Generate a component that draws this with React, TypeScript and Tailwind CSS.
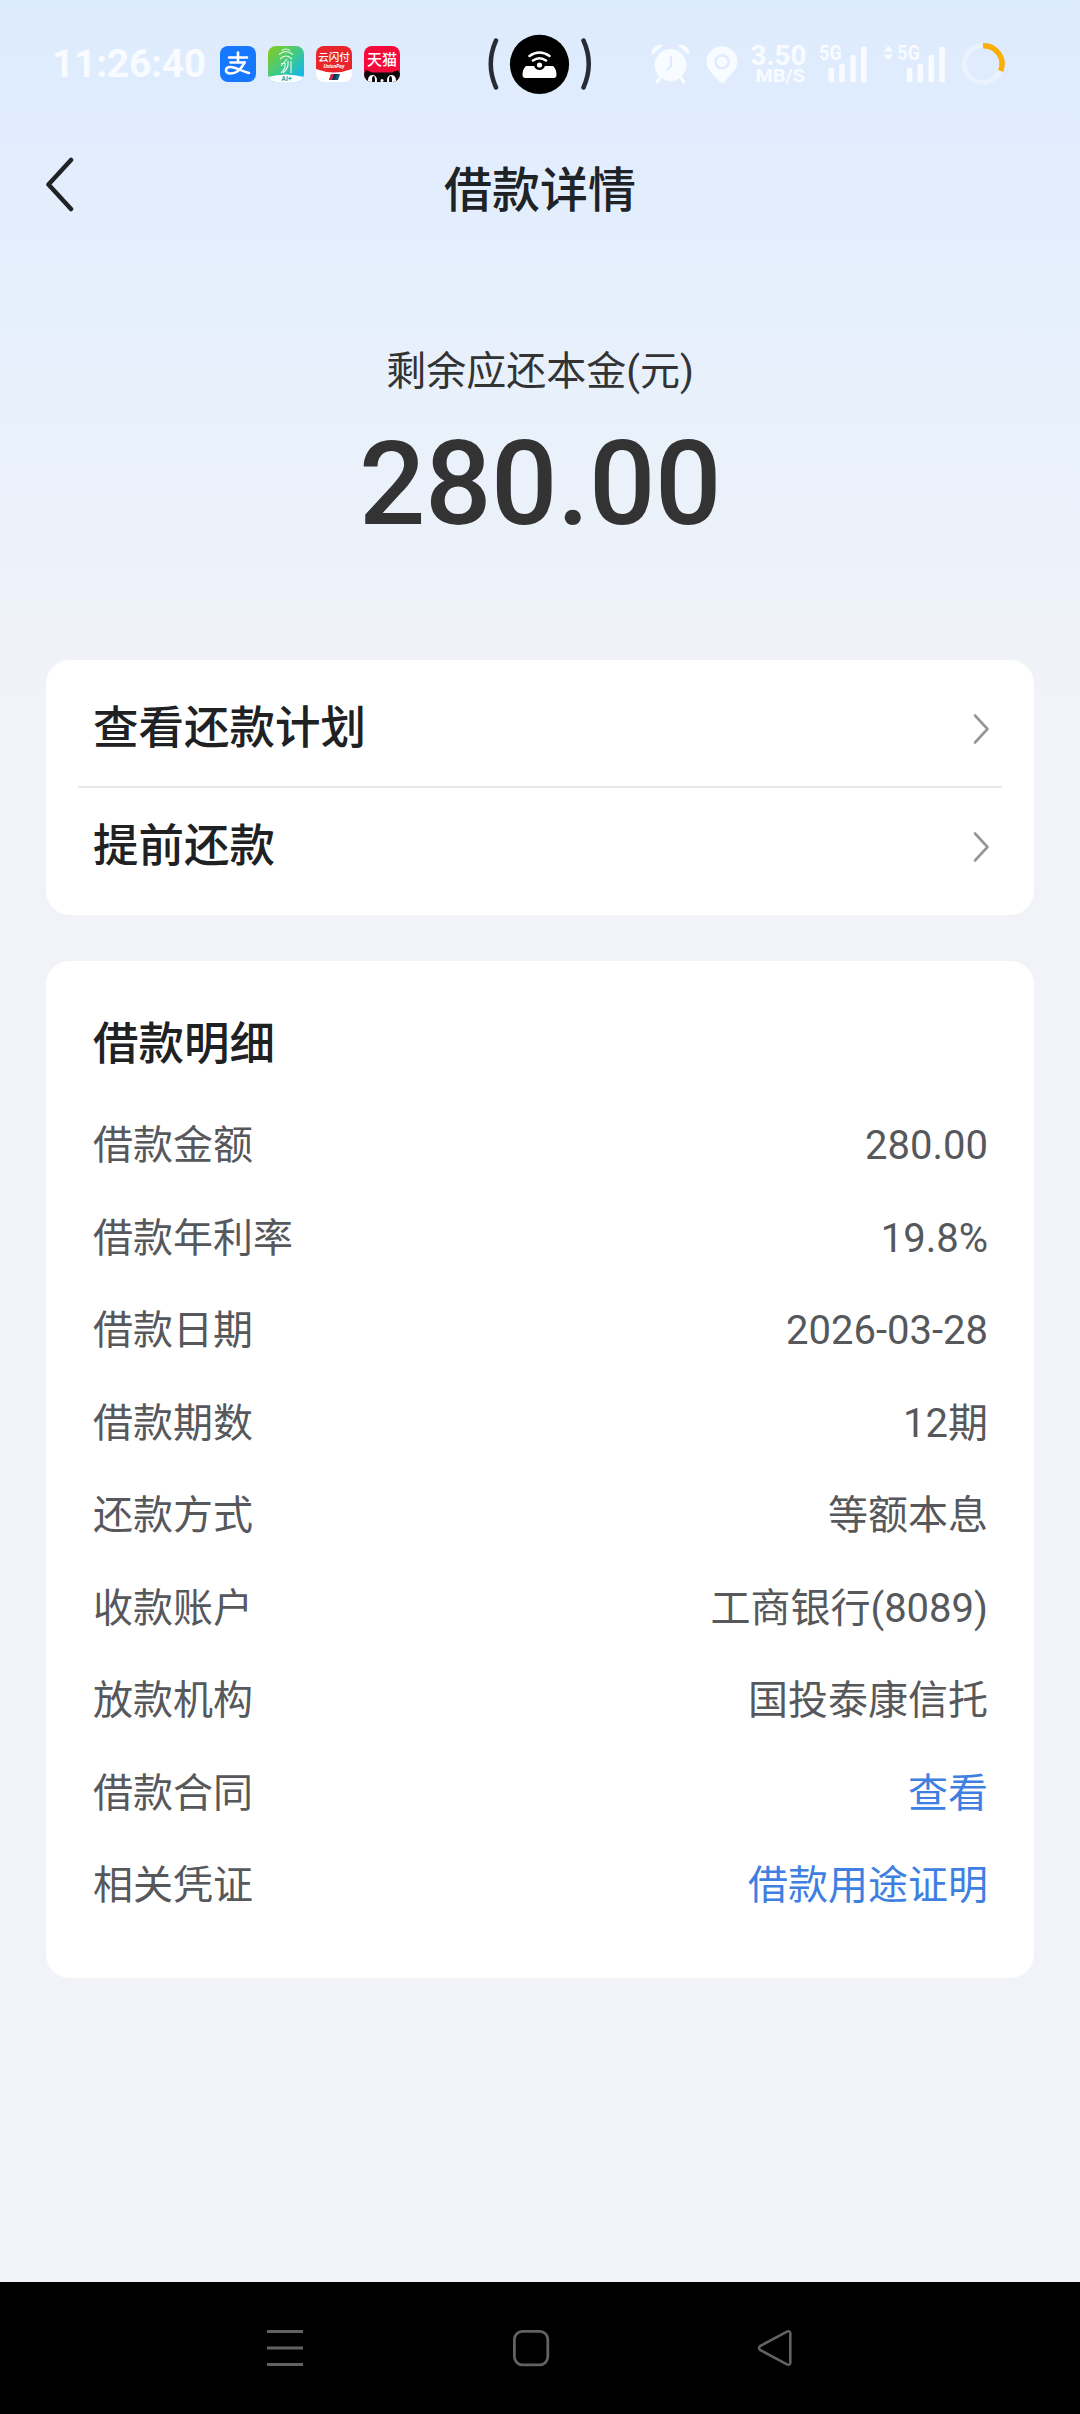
import React from 'react';

interface DetailRow {
  label: string;
  value: string;
  link?: boolean;
}

const actions = ['查看还款计划', '提前还款'];

const details: DetailRow[] = [
  { label: '借款金额', value: '280.00' },
  { label: '借款年利率', value: '19.8%' },
  { label: '借款日期', value: '2026-03-28' },
  { label: '借款期数', value: '12期' },
  { label: '还款方式', value: '等额本息' },
  { label: '收款账户', value: '工商银行(8089)' },
  { label: '放款机构', value: '国投泰康信托' },
  { label: '借款合同', value: '查看', link: true },
  { label: '相关凭证', value: '借款用途证明', link: true }
];

function AppIcons() {
  return (
    <div className="ml-[15px] flex gap-3">
      <svg width="36" height="36" viewBox="0 0 36 36">
        <rect width="36" height="36" rx="8" fill="#1677ff" />
        <g fill="none" stroke="#fff" strokeLinecap="round">
          <path d="M9 11.500h18M18 6.500v10M10.500 16.500h14" strokeWidth="2.600" />
          <path d="M24.500 16.500c-3 6-8 11-14 11-6.500 0-5.500-6.500 0-6.500 5 0 11 4 18.500 6" strokeWidth="2.600" />
        </g>
      </svg>
      <svg width="36" height="36" viewBox="0 0 36 36">
        <defs>
          <linearGradient id="leaf" x1="0" y1="0" x2="1" y2="1">
            <stop offset="0.100" stopColor="#7ccb2c" />
            <stop offset="0.500" stopColor="#3fc98a" />
            <stop offset="0.900" stopColor="#12b5ee" />
          </linearGradient>
          <clipPath id="tile">
            <rect width="36" height="36" rx="8" />
          </clipPath>
        </defs>
        <g clipPath="url(#tile)">
          <rect width="36" height="36" fill="url(#leaf)" />
          <path d="M0 31Q18 26 36 31V36H0z" fill="#fff" />
          <g fill="none" stroke="#e9fbe9" strokeWidth="1.100">
            <path d="M14 4.500q4-3 8 0M11 8.500q7-6 14 0M12 13q6-6 12 0M19 13l-6 7M13 17.500h4M17 17q1 6-4 10M20 15q1 7-5 12M23 15v12" />
          </g>
        </g>
        <text x="18.500" y="35" fontSize="7" fontWeight="700" fontFamily="Roboto" textAnchor="middle" fill="#35a7b5">AI+</text>
      </svg>
      <svg width="36" height="36" viewBox="0 0 36 36">
        <g clipPath="url(#tile)">
          <rect width="36" height="36" fill="#fff" />
          <path d="M0 0H36V23Q18 30 0 23z" fill="#e8252b" />
          <path d="M15 28h9l-2 6h-9z" fill="#0e5a72" />
          <path d="M15 28h3l-2 6h-3z" fill="#d8283a" />
          <path d="M18 28h3l-2 6h-3z" fill="#17325f" />
        </g>
        <text x="18" y="15" fontSize="10.500" fontWeight="500" fontFamily="Noto Sans CJK SC" textAnchor="middle" fill="#fff">云闪付</text>
        <text x="18" y="21.500" fontSize="5" fontStyle="italic" fontWeight="700" fontFamily="Roboto" textAnchor="middle" fill="#fff">UnionPay</text>
      </svg>
      <svg width="36" height="36" viewBox="0 0 36 36">
        <g clipPath="url(#tile)">
          <rect width="36" height="36" fill="#f50a3c" />
          <path d="M2 24l6 2.500h20l6-2.500 2 4v8H0v-8z" fill="#0a0a0a" />
          <ellipse cx="8.500" cy="34" rx="4.500" ry="5" fill="#fff" />
          <ellipse cx="27.500" cy="34" rx="4.500" ry="5" fill="#fff" />
          <ellipse cx="9.500" cy="34" rx="1.500" ry="4" fill="#0a0a0a" />
          <ellipse cx="26.500" cy="34" rx="1.500" ry="4" fill="#0a0a0a" />
          <circle cx="18" cy="34.500" r="1.500" fill="#fff" />
        </g>
        <text x="18" y="19" fontSize="15" fontWeight="500" fontFamily="Noto Sans CJK SC" textAnchor="middle" fill="#fff">天猫</text>
      </svg>
    </div>
  );
}

function CastBadge() {
  return (
    <svg className="ml-[86px]" width="108" height="62" viewBox="486 33 108 62">
      <g fill="none" stroke="#262d34" strokeWidth="4.500" strokeLinecap="round">
        <path d="M496 40.500Q485.500 64 496 87.500" />
        <path d="M583.500 40.500Q594 64 583.500 87.500" />
      </g>
      <circle cx="539.500" cy="64.300" r="29.600" fill="#000" />
      <path d="M526 66h8q1.500 4 5.500 4t5.500-4h8q3.500 3 3.500 9 0 3-3 3h-28q-3 0-3-3 0-6 3.500-9z" fill="#fff" />
      <g fill="none" stroke="#fff" strokeWidth="2.600" strokeLinecap="round">
        <path d="M529.500 56q10-7 20 0" />
        <path d="M533 60.500q6.500-4.500 13 0" />
      </g>
      <circle cx="539.500" cy="65" r="2.600" fill="#fff" />
    </svg>
  );
}

function Signal() {
  return (
    <g>
      <text x="0" y="60" fontSize="19.500" fontWeight="800" fontFamily="Roboto" textLength="22.500" lengthAdjust="spacingAndGlyphs">5G</text>
      <rect x="9.300" y="67.700" width="5.600" height="14.500" rx="1.500" />
      <rect x="20" y="63.700" width="5.600" height="18.500" rx="1.500" />
      <rect x="31" y="55" width="5.600" height="27.200" rx="1.500" />
      <rect x="41.800" y="46.700" width="5.600" height="35.500" rx="1.500" />
    </g>
  );
}

function StatusIcons() {
  return (
    <svg className="ml-[56px]" width="358" height="48" viewBox="650 40 358 48" fill="#f8fbff">
      {/* alarm */}
      <circle cx="670.500" cy="65" r="16" />
      <path d="M652.500 53.500q1-7.500 9-8zM688.500 53.500q-1-7.500-9-8z" stroke="#f8fbff" strokeWidth="2" strokeLinejoin="round" />
      <path d="M660 78l-3 4M681 78l3 4" stroke="#f8fbff" strokeWidth="3" strokeLinecap="round" />
      <path d="M671 57v9l-4 4" fill="none" stroke="#dfecfe" strokeWidth="2.200" strokeLinecap="round" />
      {/* location */}
      <path d="M722 46.200a15.500 15.500 0 0 0-15.500 15.500c0 8 8 14 13.500 20.500q2 2 4 0c5.500-6.500 13.500-12.500 13.500-20.500A15.500 15.500 0 0 0 722 46.200z" />
      <circle cx="722" cy="61.700" r="6.500" fill="none" stroke="#dfecfe" strokeWidth="2.400" />
      {/* network speed */}
      <text x="750.500" y="65.200" fontSize="27" fontWeight="800" fontFamily="Roboto" textLength="56" lengthAdjust="spacingAndGlyphs">3.50</text>
      <text x="755.500" y="81.500" fontSize="17.500" fontWeight="800" fontFamily="Roboto" textLength="49.500" lengthAdjust="spacingAndGlyphs">MB/S</text>
      <g transform="translate(819.200 0)">
        <Signal />
      </g>
      <path d="M883.500 51.500l5-6 5 6zM883.500 54.500l5 6 5-6z" />
      <g transform="translate(897.500 0)">
        <Signal />
      </g>
      {/* battery ring */}
      <circle cx="982.800" cy="64" r="18.500" fill="none" stroke="#eaf2fd" strokeWidth="5" />
      <path d="M983 45.700A18.300 18.300 0 0 1 1000.600 71" fill="none" stroke="#faae0a" strokeWidth="5.500" />
    </svg>
  );
}

function StatusBar() {
  return (
    <div className="flex h-32 items-center pl-[52px]">
      <span className="w-[153px] whitespace-nowrap text-[39px] font-bold leading-none tracking-[-0.3px] text-[#f8fbff]">11:26:40</span>
      <AppIcons />
      <CastBadge />
      <StatusIcons />
    </div>
  );
}

function Chevron() {
  return (
    <svg width="18" height="32" viewBox="0 0 18 32" fill="none" stroke="#969696" strokeWidth="2.600" strokeLinecap="round" strokeLinejoin="round">
      <path d="M3 2.500L15.500 16 3 29.500" />
    </svg>
  );
}

function NavBar() {
  return (
    <nav className="flex h-[132px] items-center bg-black pl-[266px]">
      <svg width="38" height="40" viewBox="0 0 38 40" stroke="#626262" strokeWidth="3">
        <path d="M1 3.500h36M1 20h36M1 36.500h36" />
      </svg>
      <svg className="ml-[208px]" width="38" height="40" viewBox="0 0 38 40" fill="none" stroke="#626262" strokeWidth="2.800">
        <rect x="2.400" y="3.400" width="33.400" height="33.400" rx="8" />
      </svg>
      <svg className="ml-[207px]" width="38" height="40" viewBox="0 0 38 40" fill="none" stroke="#626262" strokeWidth="2.600" strokeLinejoin="round">
        <path d="M3.500 17.800L30 3.600q3.300-1.200 3.300 2v28.800q0 3.200-3.300 2L3.500 22.200q-3-2.200 0-4.400z" />
      </svg>
    </nav>
  );
}

export default function App() {
  return (
    <div className="flex h-[2414px] w-[1080px] flex-col bg-[#f2f3f8] font-['Roboto','Noto_Sans_CJK_SC',sans-serif]">
      <div className="flex-1 bg-[linear-gradient(to_bottom,#dcebfd_0px,#e1edfe_130px,#e9f1fb_430px,#f2f3f8_720px)]">
        <StatusBar />

        <header className="flex h-[120px] items-center px-[45px]">
          <svg className="-mt-1.5 w-[80px]" height="56" viewBox="0 0 80 56" fill="none" stroke="#202326" strokeWidth="4.500" strokeLinecap="round" strokeLinejoin="round">
            <path d="M26 3L3.500 27.500 26 52" />
          </svg>
          <h1 className="flex-1 pt-[5px] text-center text-[48px] font-medium text-[#202326]">借款详情</h1>
          <div className="w-[80px]" />
        </header>

        <section className="flex h-[412px] flex-col items-center pt-[94px] text-[#333]">
          <div className="h-[60px] text-[40px] leading-[60px]">剩余应还本金(元)</div>
          <div className="mt-[22px] text-[117px] font-medium leading-[120px] tracking-[-0.5px]">280.00</div>
        </section>

        <main className="space-y-[46px] px-[46px]">
          <div className="h-[255px] rounded-[24px] bg-white px-8 pt-[11px]">
            {actions.map(action => (
              <button
                key={action}
                type="button"
                className="flex h-[117px] w-full items-center justify-between border-b-[2px] border-[#e6e7e8] pr-[12px] pl-[15px] last:border-b-0"
              >
                <span className="pt-px text-[45.500px] font-medium text-[#202123]">{action}</span>
                <Chevron />
              </button>
            ))}
          </div>

          <div className="h-[1017px] rounded-[24px] bg-white px-[46px] pt-[49px]">
            <h2 className="pl-px text-[45.500px] font-medium leading-[70px] text-[#202123]">借款明细</h2>
            <dl className="mt-[20px]">
              {details.map(row => (
                <div key={row.label} className="flex h-[92.500px] items-center justify-between pl-px text-[40px] text-[#56585c]">
                  <dt>{row.label}</dt>
                  <dd className={row.link ? 'text-[#3f7fe2]' : undefined}>{row.value}</dd>
                </div>
              ))}
            </dl>
          </div>
        </main>
      </div>
      <NavBar />
    </div>
  );
}
